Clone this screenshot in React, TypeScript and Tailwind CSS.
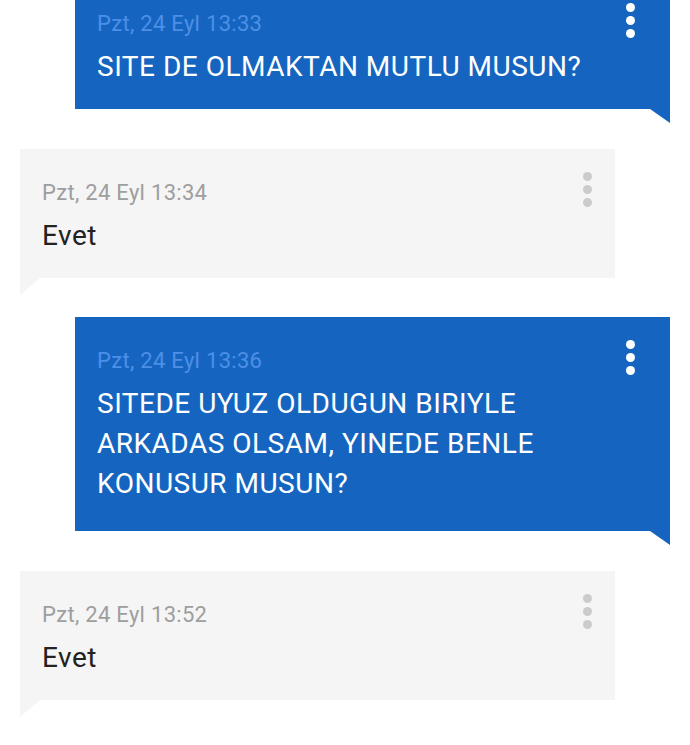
import React from "react";

type Msg = { mine: boolean; time: string; lines: string[] };

const msgs: Msg[] = [
  { mine: true, time: "Pzt, 24 Eyl 13:33", lines: ["SITE DE OLMAKTAN MUTLU MUSUN?"] },
  { mine: false, time: "Pzt, 24 Eyl 13:34", lines: ["Evet"] },
  {
    mine: true,
    time: "Pzt, 24 Eyl 13:36",
    lines: ["SITEDE UYUZ OLDUGUN BIRIYLE", "ARKADAS OLSAM, YINEDE BENLE", "KONUSUR MUSUN?"],
  },
  { mine: false, time: "Pzt, 24 Eyl 13:52", lines: ["Evet"] },
];

function Dots({ mine }: { mine: boolean }) {
  const c = mine ? "bg-white" : "bg-[#cbcbcb]";
  return (
    <div className="mt-[23px] flex flex-col items-center gap-[4px]">
      <span className={`block w-[9px] h-[9px] rounded-full ${c}`} />
      <span className={`block w-[9px] h-[9px] rounded-full ${c}`} />
      <span className={`block w-[9px] h-[9px] rounded-full ${c}`} />
    </div>
  );
}

function Bubble({ m, first }: { m: Msg; first?: boolean }) {
  const spacing = first ? "-mt-[20px]" : m.mine ? "mt-[22px]" : "mt-[26px]";
  const pb = m.lines.length > 1 ? "pb-[27px]" : "pb-[22px]";
  return (
    <div className={`w-[595px] ${m.mine ? "ml-[75px]" : "ml-[20px]"} ${spacing}`}>
      <div
        className={`flex items-start ${m.mine ? "bg-[#1565c0] pr-[35px]" : "bg-[#f5f5f5] pr-[23px]"} pl-[22px]`}
      >
        <div className={`flex-1 pt-[29px] ${pb}`}>
          <div
            className={`text-[22px] leading-[30px] tracking-[0.3px] ${m.mine ? "text-[#4d8fe6]" : "text-[#9e9e9e]"}`}
          >
            {m.time}
          </div>
          <div
            className={`mt-[8px] text-[28px] leading-[40px] tracking-[0.5px] ${m.mine ? "text-white" : "text-[#222222]"}`}
          >
            {m.lines.map((l, i) => (
              <div key={i}>{l}</div>
            ))}
          </div>
        </div>
        <Dots mine={m.mine} />
      </div>
      {m.mine ? (
        <div className="flex justify-end">
          <svg width="20" height="14" viewBox="0 0 20 14" className="block">
            <polygon points="0,0 20,0 20,14" fill="#1565c0" />
          </svg>
        </div>
      ) : (
        <div className="flex justify-start">
          <svg width="20" height="17" viewBox="0 0 20 17" className="block">
            <polygon points="0,0 20,0 0,17" fill="#f5f5f5" />
          </svg>
        </div>
      )}
    </div>
  );
}

export default function App() {
  return (
    <div
      className="w-[690px] h-[745px] overflow-hidden bg-white"
      style={{ fontFamily: "Roboto, 'Noto Sans', sans-serif" }}
    >
      {msgs.map((m, i) => (
        <Bubble key={i} m={m} first={i === 0} />
      ))}
    </div>
  );
}
